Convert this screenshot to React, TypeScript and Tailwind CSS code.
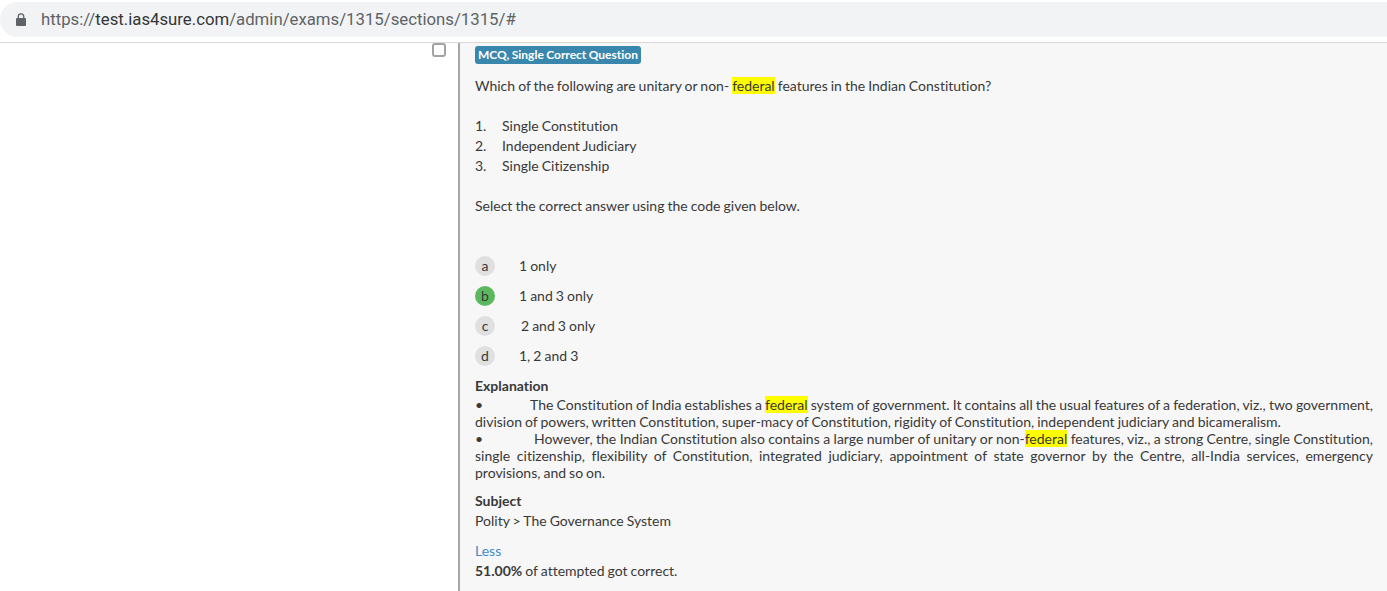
const Mark = ({ children }: { children: string }) => (
  <span className="bg-[#ffff00]">{children}</span>
);

const options = [
  { key: "a", text: "1 only", ml: "ml-6", active: false },
  { key: "b", text: "1 and 3 only", ml: "ml-6", active: true },
  { key: "c", text: "2 and 3 only", ml: "ml-[26px]", active: false },
  { key: "d", text: "1, 2 and 3", ml: "ml-6", active: false },
];

export default function App() {
  return (
    <div className="h-[591px] w-[1387px] overflow-hidden bg-white font-['Lato','Open_Sans',sans-serif] text-[14px] text-[#393939] [font-variant-ligatures:none] [word-spacing:-0.55px]">
      <div className="pt-0.5 pb-[5px] h-[42px]">
        <div className="flex h-[35px] items-center rounded-l-[18px] bg-[#f1f3f4] pl-4">
          <svg width="10" height="13" viewBox="0 0 10 13" className="text-[#5f6368]">
            <path
              fill="currentColor"
              d="M1 5h.6V3.6a3.4 3.4 0 0 1 6.8 0V5H9a1 1 0 0 1 1 1v6a1 1 0 0 1-1 1H1a1 1 0 0 1-1-1V6a1 1 0 0 1 1-1zm1.9 0h4.2V3.6a2.1 2.1 0 0 0-4.2 0z"
            />
          </svg>
          <div className="ml-[15px] font-['Roboto',sans-serif] text-[16.75px] text-[#5f6368]">
            https://<span className="text-[#333638]">test.ias4sure.com</span>/admin/exams/1315/sections/1315/#
          </div>
        </div>
      </div>
      <div className="flex h-[549px] border-t border-[#d9d9d9]">
        <div className="flex w-[458px] shrink-0 justify-end pr-3">
          <div className="h-[14px] w-[14px] rounded-[3px] border-2 border-[#a3a3a3] bg-white" />
        </div>
        <div className="flex-1 border-l-[2px] border-[#a6a6a6] bg-[#f7f7f7] pl-[15px] pr-[14px] pt-[3px]">
          <div className="flex h-[18px] w-fit items-center rounded-[3px] bg-[#3a87ad] px-[3px] text-[12px] font-bold text-white">
            MCQ, Single Correct Question
          </div>
          <p className="mt-[12px] leading-5">
            Which of the following are unitary or non- <Mark>federal</Mark> features in the Indian Constitution?
          </p>
          <ol className="mt-5 leading-5">
            <li className="flex"><span className="w-[27px]">1.</span>Single Constitution</li>
            <li className="flex"><span className="w-[27px]">2.</span>Independent Judiciary</li>
            <li className="flex"><span className="w-[27px]">3.</span>Single Citizenship</li>
          </ol>
          <p className="mt-5 leading-5">Select the correct answer using the code given below.</p>
          <div className="mt-[40px] flex flex-col gap-2.5">
            {options.map((o) => (
              <div key={o.key} className="flex h-5 items-center leading-5">
                <span
                  className={
                    o.active
                      ? "flex h-5 w-5 items-center justify-center rounded-full bg-[#5cb85c]"
                      : "flex h-5 w-5 items-center justify-center rounded-full bg-[#e0e0e0]"
                  }
                >
                  {o.key}
                </span>
                <span className={o.ml}>{o.text}</span>
              </div>
            ))}
          </div>
          <div className="mt-[10px] font-bold leading-5">Explanation</div>
          <div className="text-justify leading-[17px]">
            <p>
              <span className="inline-block w-[55px]">•</span>The Constitution of India establishes a <Mark>federal</Mark> system of government. It contains all the usual features of a federation, viz., two government, division of powers, written Constitution, super-macy of Constitution, rigidity of Constitution, independent judiciary and bicameralism.
            </p>
            <p>
              <span className="inline-block w-[59px]">•</span>However, the Indian Constitution also contains a large number of unitary or non-<Mark>federal</Mark> features, viz., a strong Centre, single Constitution, single citizenship, flexibility of Constitution, integrated judiciary, appointment of state governor by the Centre, all-India services, emergency provisions, and so on.
            </p>
          </div>
          <div className="mt-[10px] font-bold leading-5">Subject</div>
          <div className="leading-5">Polity &gt; The Governance System</div>
          <a className="mt-2.5 block leading-5 text-[#428bca]">Less</a>
          <div className="leading-5">
            <b>51.00%</b> of attempted got correct.
          </div>
        </div>
      </div>
    </div>
  );
}
